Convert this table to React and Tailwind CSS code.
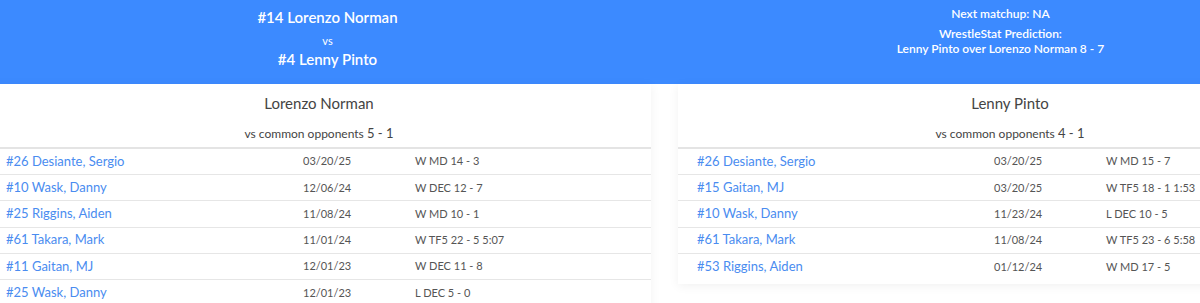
import React from 'react'

const left = [
  ['#26 Desiante, Sergio', '03/20/25', 'W MD 14 - 3'],
  ['#10 Wask, Danny', '12/06/24', 'W DEC 12 - 7'],
  ['#25 Riggins, Aiden', '11/08/24', 'W MD 10 - 1'],
  ['#61 Takara, Mark', '11/01/24', 'W TF5 22 - 5 5:07'],
  ['#11 Gaitan, MJ', '12/01/23', 'W DEC 11 - 8'],
  ['#25 Wask, Danny', '12/01/23', 'L DEC 5 - 0'],
]

const right = [
  ['#26 Desiante, Sergio', '03/20/25', 'W MD 15 - 7'],
  ['#15 Gaitan, MJ', '03/20/25', 'W TF5 18 - 1 1:53'],
  ['#10 Wask, Danny', '11/23/24', 'L DEC 10 - 5'],
  ['#61 Takara, Mark', '11/08/24', 'W TF5 23 - 6 5:58'],
  ['#53 Riggins, Aiden', '01/12/24', 'W MD 17 - 5'],
]

const Card = ({ name, record, rows }) => (
  <div className="w-[664px] shrink-0 bg-white shadow-[0_2px_10px_rgba(0,0,0,0.06)] pb-[4px] self-start">
    <div className="pt-[8px] text-center text-[15px] leading-[22px] text-[#444]">{name}</div>
    <div className="pt-[10px] pb-[4px] text-center text-[12px] leading-[18px] text-[#444]">
      vs common opponents <span className="text-[13px]">{record}</span>
    </div>
    <div className="border-t-2 border-[#e4e4e4]">
      {rows.map((r, i) => (
        <div
          key={i}
          className="grid grid-cols-[297px_112px_1fr] items-center h-[26.2px] pl-[19px] border-b border-[#e6e6e6] last:border-b-0"
        >
          <a href="#" className="text-[13px] text-[#4a8cf0]">{r[0]}</a>
          <span className="text-[11px] text-[#555]">{r[1]}</span>
          <span className="text-[11px] text-[#555]">{r[2]}</span>
        </div>
      ))}
    </div>
  </div>
)

export default function App() {
  return (
    <div className="w-[1200px] h-[303px] overflow-hidden bg-white" style={{ fontFamily: 'Lato, "Noto Sans", sans-serif' }}>
      <header className="h-[84px] bg-[#3c8aff] text-white">
        <div className="flex -ml-[9px]">
          <div className="w-[673px] shrink-0 text-center pt-[7px]">
            <div className="text-[15px] font-semibold leading-[20px]">#14 Lorenzo Norman</div>
            <div className="text-[11px] leading-[14px] mt-[7px]">vs</div>
            <div className="text-[15px] font-semibold leading-[20px] mt-[1px]">#4 Lenny Pinto</div>
          </div>
          <div className="w-[673px] shrink-0 text-center pt-[6px] text-[12px] leading-[15px] font-semibold">
            <div>Next matchup: NA</div>
            <div className="mt-[5px]">WrestleStat Prediction:</div>
            <div>Lenny Pinto over Lorenzo Norman 8 - 7</div>
          </div>
        </div>
      </header>
      <div className="flex gap-[27px] -ml-[13px]">
        <Card name="Lorenzo Norman" record="5 - 1" rows={left} />
        <Card name="Lenny Pinto" record="4 - 1" rows={right} />
      </div>
    </div>
  )
}
